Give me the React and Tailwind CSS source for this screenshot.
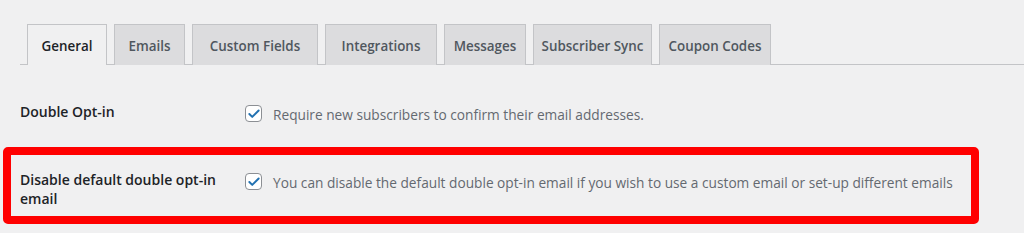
import { Check } from 'lucide-react'

const tabs = [
  { name: 'General', w: 'w-[80px]', active: true },
  { name: 'Emails', w: 'w-[71px]' },
  { name: 'Custom Fields', w: 'w-[126px]' },
  { name: 'Integrations', w: 'w-[112px]' },
  { name: 'Messages', w: 'w-[82px]' },
  { name: 'Subscriber Sync', w: 'w-[119px]' },
  { name: 'Coupon Codes', w: 'w-[112px]' },
]

function Checkbox() {
  return (
    <span className="flex h-[17px] w-[17px] shrink-0 items-center justify-center rounded-[4px] border border-[#8c8f94] bg-white">
      <Check className="h-[14px] w-[14px] text-[#2271b1]" strokeWidth={3.4} />
    </span>
  )
}

function Row({ label, children }) {
  return (
    <div className="flex items-start">
      <div className="w-[225px] shrink-0 pr-[20px] text-[14px] font-semibold leading-[19px] text-[#1d2327]">
        {label}
      </div>
      <div className="mt-[3px] flex items-start gap-[11px]">
        <Checkbox />
        <p className="whitespace-nowrap text-[13.7px] leading-[19px] text-[#646970]">{children}</p>
      </div>
    </div>
  )
}

export default function App() {
  return (
    <div className="h-[233px] w-[1024px] overflow-hidden bg-[#f0f0f1] font-['Open_Sans',sans-serif]">
      {/* tab bar */}
      <div className="ml-[20px] flex gap-[7px] border-b border-[#c3c4c7] pt-[24px] pl-[7px]">
        {tabs.map((t) => (
          <div
            key={t.name}
            className={`${t.w} -mb-px flex h-[41px] items-center justify-center border border-b-0 border-[#c3c4c7] pt-[2px] text-[13.4px] font-semibold ${
              t.active ? 'bg-[#f0f0f1] text-[#1d2327]' : 'bg-[#dcdcde] text-[#50575e]'
            }`}
          >
            {t.name}
          </div>
        ))}
      </div>

      <div className="pt-[37px] pl-[20px]">
        <Row label="Double Opt-in">Require new subscribers to confirm their email addresses.</Row>
      </div>

      {/* highlighted setting */}
      <div className="mt-[23px] ml-[3px] w-[976px] rounded-[5px] border-[8px] border-[#ff0000] pl-[9px] pt-[15px] pb-[8px]">
        <div className="w-[470px]">
          <Row label="Disable default double opt-in email">
            You can disable the default double opt-in email if you wish to use a custom email or set-up different emails
          </Row>
        </div>
      </div>
    </div>
  )
}
